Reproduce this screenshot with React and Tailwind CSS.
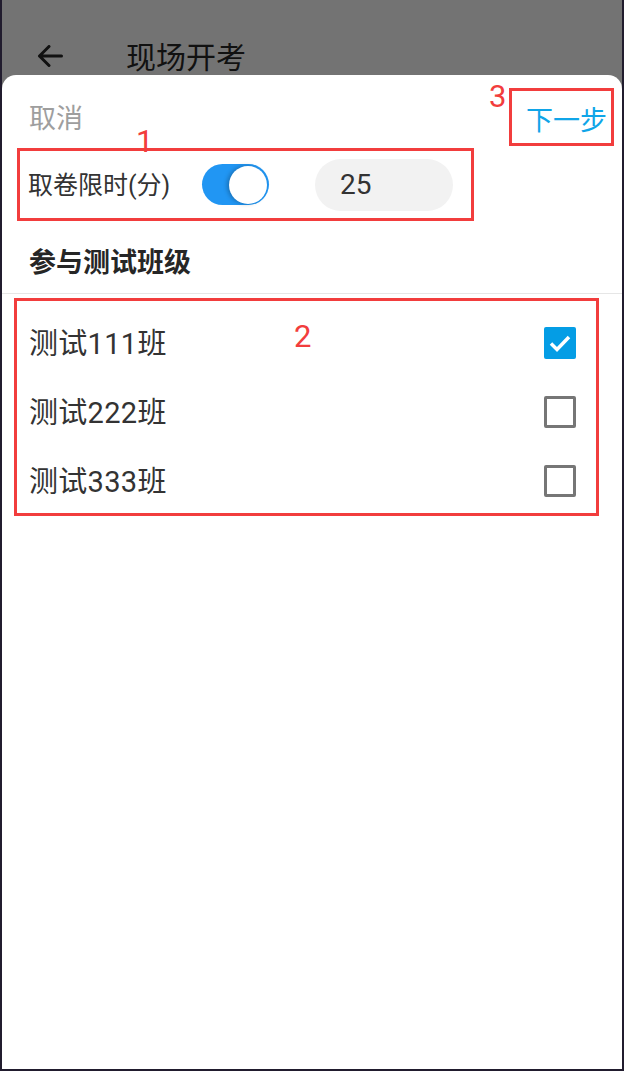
import React, { useState } from 'react';

const classes = [
    { id: 1, name: '测试111班' },
    { id: 2, name: '测试222班' },
    { id: 3, name: '测试333班' },
];

export default function App() {
    const [limitOn, setLimitOn] = useState(true);
    const [minutes, setMinutes] = useState('25');
    const [checked, setChecked] = useState([1]);

    const toggleClass = (id) => {
        setChecked(checked.includes(id) ? checked.filter(c => c !== id) : [...checked, id]);
    };

    return (
        <div
            className="w-[624px] h-[1071px] bg-[#737373] border-l-2 border-r-2 border-b-2 border-[#211c2e] flex flex-col overflow-hidden"
            style={{ fontFamily: 'Roboto, "Noto Sans CJK SC", sans-serif' }}
        >
            {/* header under the overlay */}
            <div className="h-[75px] shrink-0 flex items-center pt-[37px] pl-[35px]">
                <svg width="26" height="22" viewBox="0 0 26 22" fill="none">
                    <path d="M24.5 11H2.5M12 1.5L2.5 11L12 20.5" stroke="#111" strokeWidth="3" strokeLinecap="round" strokeLinejoin="round" />
                </svg>
                <span className="ml-[63px] mt-[3px] text-[30px] leading-none text-[#111]">现场开考</span>
            </div>

            {/* bottom sheet */}
            <div className="flex-1 bg-white rounded-t-[14px] flex flex-col">
                <div className="h-[73px] flex justify-between items-start pl-[27px] pr-[8px]">
                    <button className="mt-[31px] text-[27px] leading-none text-[#9e9e9e]">取消</button>
                    <div className="relative mt-[13px] w-[105px] h-[58px] border-[3px] border-[#f23d3d] flex items-start pt-[17px] pl-[14px]">
                        <span className="absolute left-[-23px] top-[-10px] text-[31px] leading-none text-[#f23d3d]">3</span>
                        <button className="text-[27px] leading-none text-[#10a5e8]">下一步</button>
                    </div>
                </div>

                <div className="relative ml-[15px] w-[457px] h-[73px] border-[3px] border-[#f23d3d] flex items-center pl-[8px]">
                    <span className="absolute left-[116px] top-[-25px] text-[31px] leading-none text-[#f23d3d]">1</span>
                    <span className="w-[174px] shrink-0 pt-[2px] text-[25px] leading-none text-[#333]">取卷限时(分)</span>
                    <button
                        onClick={() => setLimitOn(!limitOn)}
                        className={limitOn
                            ? "w-[67px] h-[41px] shrink-0 rounded-full bg-[#2196f3] p-[2px] flex items-center justify-end"
                            : "w-[67px] h-[41px] shrink-0 rounded-full bg-[#cfcfcf] p-[2px] flex items-center justify-start"}
                    >
                        <span className="w-[38px] h-[38px] rounded-full bg-white shadow-[-2px_0_4px_rgba(0,0,0,0.25)]" />
                    </button>
                    <div className="ml-[46px] w-[138px] h-[52px] shrink-0 rounded-full bg-[#f2f2f2] flex items-center pl-[25px]">
                        <input
                            value={minutes}
                            onChange={e => setMinutes(e.target.value)}
                            className="w-[90px] bg-transparent outline-none text-[28px] leading-none text-[#333]"
                        />
                    </div>
                </div>

                <div className="mt-[29px] pl-[27px] text-[27px] leading-none font-bold text-[#262626]">参与测试班级</div>
                <div className="mt-[16px] h-px bg-[#e6e6e6]" />

                <div className="relative mt-[4px] ml-[12px] w-[585px] h-[218px] border-[3px] border-[#f23d3d] pt-[7px]">
                    <span className="absolute left-[277px] top-[20px] text-[31px] leading-none text-[#f23d3d]">2</span>
                    {classes.map((c) => (
                        <div
                            key={c.id}
                            onClick={() => toggleClass(c.id)}
                            className="h-[69px] flex items-center justify-between pl-[12px] pr-[20px]"
                        >
                            <span className="pt-[4px] text-[29px] leading-none tracking-[0.3px] text-[#333]">{c.name}</span>
                            {checked.includes(c.id) ? (
                                <span className="w-[32px] h-[32px] rounded-[2px] bg-[#049de5] flex items-center justify-center">
                                    <svg width="32" height="32" viewBox="0 0 32 32" fill="none">
                                        <path d="M7 16.5L13 22.5L25 10" stroke="white" strokeWidth="3.5" />
                                    </svg>
                                </span>
                            ) : (
                                <span className="w-[32px] h-[32px] rounded-[2px] border-[3px] border-[#767676]" />
                            )}
                        </div>
                    ))}
                </div>
            </div>
        </div>
    );
}
